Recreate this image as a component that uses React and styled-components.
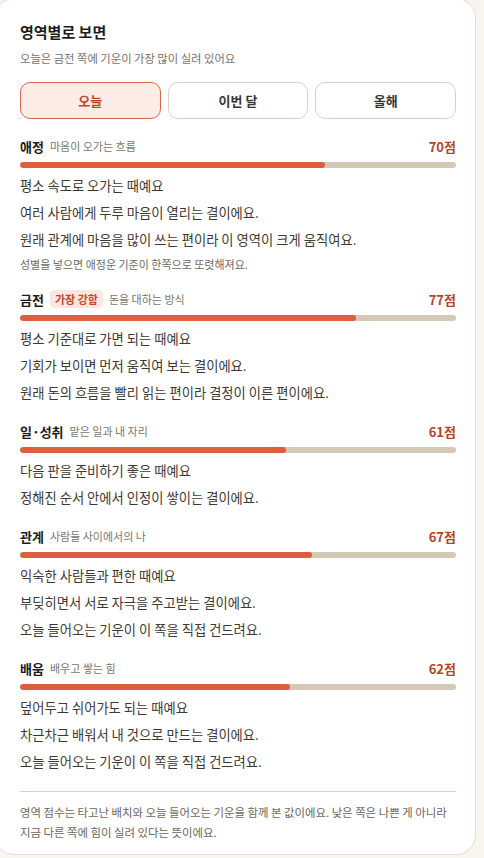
import styled, { createGlobalStyle } from "styled-components";
import { useState } from "react";

const GlobalStyle = createGlobalStyle`
  html, body {
    margin: 0;
    padding: 0;
    background: #f8f4ee;
    overflow: hidden;
  }
  body {
    font-family: "Noto Sans CJK KR", "Noto Sans", sans-serif;
  }
`;

const areas = [
  {
    name: "애정",
    desc: "마음이 오가는 흐름",
    score: 70,
    lines: [
      "평소 속도로 오가는 때예요",
      "여러 사람에게 두루 마음이 열리는 결이에요.",
      "원래 관계에 마음을 많이 쓰는 편이라 이 영역이 크게 움직여요.",
    ],
    note: "성별을 넣으면 애정운 기준이 한쪽으로 또렷해져요.",
  },
  {
    name: "금전",
    badge: "가장 강함",
    desc: "돈을 대하는 방식",
    score: 77,
    lines: [
      "평소 기준대로 가면 되는 때예요",
      "기회가 보이면 먼저 움직여 보는 결이에요.",
      "원래 돈의 흐름을 빨리 읽는 편이라 결정이 이른 편이에요.",
    ],
  },
  {
    name: "일·성취",
    desc: "맡은 일과 내 자리",
    score: 61,
    lines: ["다음 판을 준비하기 좋은 때예요", "정해진 순서 안에서 인정이 쌓이는 결이에요."],
  },
  {
    name: "관계",
    desc: "사람들 사이에서의 나",
    score: 67,
    lines: [
      "익숙한 사람들과 편한 때예요",
      "부딪히면서 서로 자극을 주고받는 결이에요.",
      "오늘 들어오는 기운이 이 쪽을 직접 건드려요.",
    ],
  },
  {
    name: "배움",
    desc: "배우고 쌓는 힘",
    score: 62,
    lines: [
      "덮어두고 쉬어가도 되는 때예요",
      "차근차근 배워서 내 것으로 만드는 결이에요.",
      "오늘 들어오는 기운이 이 쪽을 직접 건드려요.",
    ],
  },
];

const tabs = ["오늘", "이번 달", "올해"];

function App() {
  const [tab, setTab] = useState("오늘");

  return (
    <>
      <GlobalStyle />
      <Card>
        <Title>영역별로 보면</Title>
        <Subtitle>오늘은 금전 쪽에 기운이 가장 많이 실려 있어요</Subtitle>
        <Tabs>
          {tabs.map((t) => (
            <Tab key={t} $active={tab === t} onClick={() => setTab(t)}>
              {t}
            </Tab>
          ))}
        </Tabs>
        <Areas>
          {areas.map((a) => (
            <Area key={a.name}>
              <AreaHead>
                <AreaName>{a.name}</AreaName>
                {a.badge && <Badge>{a.badge}</Badge>}
                <AreaDesc>{a.desc}</AreaDesc>
                <Score>{a.score}점</Score>
              </AreaHead>
              <Track>
                <Fill style={{ width: `${a.score}%` }} />
              </Track>
              <Lines>
                {a.lines.map((l, i) => (
                  <Line key={i}>{l}</Line>
                ))}
              </Lines>
              {a.note && <Note>{a.note}</Note>}
            </Area>
          ))}
        </Areas>
        <Footer>
          영역 점수는 타고난 배치와 오늘 들어오는 기운을 함께 본 값이에요. 낮은 쪽은 나쁜 게 아니라
          지금 다른 쪽에 힘이 실려 있다는 뜻이에요.
        </Footer>
      </Card>
    </>
  );
}

export default App;

const Card = styled.div`
  box-sizing: border-box;
  width: 482px;
  height: 857px;
  margin: -2px 0 0 -6px;
  padding: 21px 19px 0 25px;
  background: #fff;
  border: 1px solid #e3dbcf;
  border-radius: 20px;
`;

const Title = styled.h2`
  margin: 0;
  font-size: 15px;
  line-height: 24px;
  font-weight: 700;
  color: #1c1c1c;
`;

const Subtitle = styled.p`
  margin: 6px 0 0;
  font-size: 11.3px;
  line-height: 16px;
  color: #76716b;
`;

const Tabs = styled.div`
  display: grid;
  grid-template-columns: repeat(3, 1fr);
  gap: 7px;
  margin-top: 16px;
`;

const Tab = styled.button`
  height: 37px;
  border-radius: 10px;
  border: 1px solid ${(p) => (p.$active ? "#d9674d" : "#d9d0c3")};
  background: ${(p) => (p.$active ? "#fdebe5" : "#fff")};
  color: ${(p) => (p.$active ? "#c4452b" : "#3a3733")};
  font-family: inherit;
  font-size: 13px;
  font-weight: 700;
  cursor: pointer;
`;

const Areas = styled.div`
  display: flex;
  flex-direction: column;
  gap: 16px;
  margin-top: 18px;
`;

const Area = styled.section`
  display: flex;
  flex-direction: column;
`;

const AreaHead = styled.div`
  display: flex;
  align-items: center;
  height: 18px;
`;

const AreaName = styled.span`
  font-size: 13px;
  font-weight: 700;
  color: #1c1c1c;
  margin-right: 6px;
`;

const Badge = styled.span`
  font-size: 11px;
  font-weight: 700;
  color: #c8462d;
  background: #fce7e0;
  border-radius: 5px;
  padding: 1px 5px;
  margin-right: 6px;
  line-height: 16px;
`;

const AreaDesc = styled.span`
  font-size: 11px;
  color: #7a756f;
`;

const Score = styled.span`
  margin-left: auto;
  font-size: 13px;
  font-weight: 700;
  color: #b3442a;
`;

const Track = styled.div`
  height: 6px;
  margin-top: 7px;
  border-radius: 3px;
  background: #d5c8b6;
  overflow: hidden;
`;

const Fill = styled.div`
  height: 100%;
  border-radius: 3px;
  background: #dc5e3e;
`;

const Lines = styled.div`
  margin-top: 3.5px;
`;

const Line = styled.p`
  margin: 0;
  font-size: 13.3px;
  line-height: 27.2px;
  color: #3d3935;
`;

const Note = styled.p`
  margin: 1px 0 0;
  font-size: 11px;
  line-height: 20px;
  color: #6e6963;
`;

const Footer = styled.p`
  margin: 16px 0 0;
  padding-top: 10px;
  border-top: 1px solid #d9d1c6;
  font-size: 11.4px;
  line-height: 20px;
  color: #6b6661;
`;
